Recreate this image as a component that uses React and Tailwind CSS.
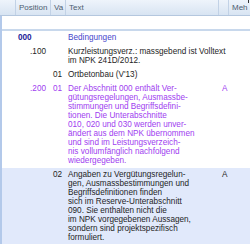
import React from "react";

const rows = [
  {
    pos: "000",
    level0: true,
    va: "",
    posCls: "font-bold text-[#22229a]",
    textCls: "text-[#4646cc]",
    lines: ["Bedingungen"],
    a: "",
  },
  {
    pos: ".100",
    va: "",
    posCls: "text-[#1e1e1e]",
    textCls: "text-[#1e1e1e]",
    lines: ["Kurzleistungsverz.: massgebend ist Volltext", "im NPK 241D/2012."],
    a: "",
  },
  {
    pos: "",
    va: "01",
    posCls: "text-[#1e1e1e]",
    textCls: "text-[#1e1e1e]",
    lines: ["Ortbetonbau (V'13)"],
    a: "",
  },
  {
    pos: ".200",
    va: "01",
    posCls: "text-[#a040f0]",
    textCls: "text-[#a040f0]",
    lines: [
      "Der Abschnitt 000 enthält Ver-",
      "gütungsregelungen, Ausmassbe-",
      "stimmungen und Begriffsdefini-",
      "tionen. Die Unterabschnitte",
      "010, 020 und 030 werden unver-",
      "ändert aus dem NPK übernommen",
      "und sind im Leistungsverzeich-",
      "nis vollumfänglich nachfolgend",
      "wiedergegeben.",
    ],
    a: "A",
  },
  {
    pos: "",
    va: "02",
    posCls: "text-[#1e1e1e]",
    textCls: "text-[#1e1e1e]",
    lines: [
      "Angaben zu Vergütungsregelun-",
      "gen, Ausmassbestimmungen und",
      "Begriffsdefinitionen finden",
      "sich im Reserve-Unterabschnitt",
      "090. Sie enthalten nicht die",
      "im NPK vorgegebenen Aussagen,",
      "sondern sind projektspezifisch",
      "formuliert.",
    ],
    a: "A",
    selected: true,
  },
];

export default function App() {
  return (
    <div
      className="w-[250px] h-[244px] overflow-hidden bg-white relative text-[8.2px] leading-[9px]"
      style={{ fontFamily: '"Liberation Sans", Arial, sans-serif' }}
    >
      {/* header */}
      <div className="flex h-[16px] bg-gradient-to-b from-[#eef4fb] to-[#d8e4f2] border-b border-[#b4c7de] text-[#4d5d70] text-[8px]">
        <div className="w-[16px] border-r border-[#c2d2e6]" />
        <div className="w-[35px] border-r border-[#c2d2e6] pl-[3px] flex items-center">Position</div>
        <div className="w-[15px] border-r border-[#c2d2e6] pl-[3px] flex items-center">Va</div>
        <div className="w-[153px] border-r border-[#c2d2e6] pl-[3px] flex items-center">Text</div>
        <div className="w-[10px] border-r border-[#c2d2e6]" />
        <div className="flex-1 pl-[3px] flex items-center">Meh</div>
      </div>
      <div className="absolute right-[1px] top-0 w-[1px] h-[3px] bg-[#333]" />
      {/* body */}
      <div className="border-l-2 border-[#b3c9ea] h-[228px]">
        <div className="h-[13px]" />
        <div className="h-[2px] bg-[#c8d8ec]" />
        {rows.map((r, i) => (
          <div
            key={i}
            className={`flex pt-[2px] ${r.selected ? "bg-[#e1e9fb] pb-[20px]" : "pb-[3px]"}`}
          >
            <div className={`w-[49px] shrink-0 ${r.level0 ? "pl-[16px] text-left" : "text-right pr-[5px]"}`}>
              <span className={r.posCls}>{r.pos}</span>
            </div>
            <div className={`w-[15px] shrink-0 pl-[2px] ${r.posCls}`}>{r.va}</div>
            <div className={`w-[153px] shrink-0 pl-[2px] ${r.textCls}`}>
              {r.lines.map((l, j) => (
                <div key={j} className="whitespace-nowrap">{l}</div>
              ))}
            </div>
            <div className={`pl-[3px] ${r.textCls}`}>{r.a}</div>
          </div>
        ))}
      </div>
    </div>
  );
}
